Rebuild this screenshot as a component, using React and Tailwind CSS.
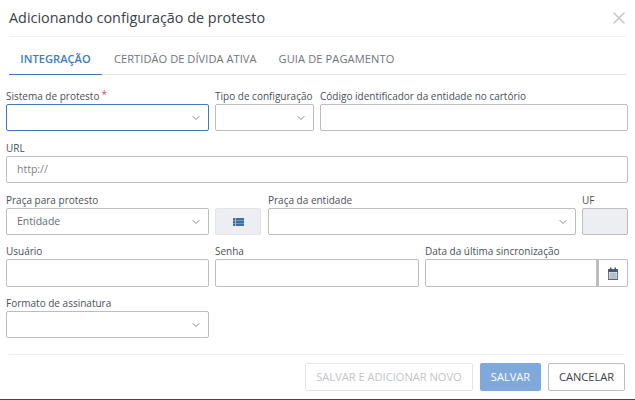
import React from "react";
import { ChevronDown, X } from "lucide-react";

const font = { fontFamily: '"Open Sans", sans-serif' };

function Label({ children, star }) {
  return (
    <div className="h-[13px] text-[10px] leading-[13px] text-[#4a4f57] whitespace-nowrap">
      {children}
      {star && <span className="text-[#d9534f] ml-[2px] relative -top-[2px]">*</span>}
    </div>
  );
}

function Box({ children, focus, disabled, className = "h-[27px]" }) {
  return (
    <div
      className={`mt-[1px] rounded-[2px] border flex items-center justify-between pl-[10px] pr-[6px] text-[10.5px] text-[#666b73] ${
        focus ? "border-[#3b7cc4]" : "border-[#bdbdbd]"
      } ${disabled ? "bg-[#eceef1]" : "bg-white"} ${className}`}
    >
      {children}
    </div>
  );
}

function Chevron() {
  return <ChevronDown size={12} strokeWidth={1.6} className="text-[#666b73] ml-auto" />;
}

function Calendar() {
  return (
    <svg width="10" height="13" viewBox="0 0 10 13">
      <rect x="0.5" y="2.5" width="9" height="10" fill="#eef2f6" stroke="#55677c" />
      <rect x="0.5" y="2.5" width="9" height="2.5" fill="#4a5a6c" />
      <rect x="2" y="0.5" width="1.5" height="3" fill="#5a4a40" />
      <rect x="6.5" y="0.5" width="1.5" height="3" fill="#40506a" />
      <path d="M0 7h10M0 9h10M0 11h10M3 5v7M5 5v7M7 5v7" stroke="#8a9bb0" strokeWidth="0.7" />
    </svg>
  );
}

function ListIcon() {
  return (
    <svg width="11" height="8" viewBox="0 0 11 8">
      <rect x="0" y="0" width="11" height="8" fill="#3f6fa6" />
      <rect x="0" y="2.4" width="11" height="0.5" fill="#a9bdd6" />
      <rect x="0" y="5.1" width="11" height="0.5" fill="#a9bdd6" />
      <rect x="2" y="0" width="0.8" height="8" fill="#c9c4c4" />
    </svg>
  );
}

export default function App() {
  return (
    <div className="w-[635px] h-[400px] bg-white flex flex-col overflow-hidden border-b border-[#444]" style={font}>
      <div className="mx-[9px] h-[37px] border-b border-[#f0f0f0] flex items-center justify-between shrink-0">
        <span className="text-[14.4px] leading-[20px] text-[#3c4046]">
          Adicionando configuração de protesto
        </span>
        <X size={20} strokeWidth={1.8} className="text-[#c4c6c9] -mr-[3px]" />
      </div>

      <div className="mx-[9px] mt-[12px] h-[26px] border-b border-[#e4e4e4] flex text-[11.1px] leading-[14px] tracking-[0.04px] shrink-0">
        <div className="w-[93px] h-[26px] border-b border-[#3b7cc4] text-center pt-[3px] font-semibold text-[#3b7cc4]">
          INTEGRAÇÃO
        </div>
        <div className="ml-[12px] pt-[3px] text-[#6f747b]">CERTIDÃO DE DÍVIDA ATIVA</div>
        <div className="ml-[22px] pt-[3px] text-[#6f747b] tracking-[0.1px]">GUIA DE PAGAMENTO</div>
      </div>

      <div className="pl-[6px] pr-[7px] pt-[15px] flex flex-col">
        <div className="flex gap-[6px]">
          <div className="w-[203px]">
            <Label star>Sistema de protesto</Label>
            <Box focus><Chevron /></Box>
          </div>
          <div className="w-[99px]">
            <Label>Tipo de configuração</Label>
            <Box><Chevron /></Box>
          </div>
          <div className="flex-1">
            <Label>Código identificador da entidade no cartório</Label>
            <Box />
          </div>
        </div>

        <div className="mt-[11px]">
          <Label>URL</Label>
          <Box><span className="text-[#7b8087]">http://</span></Box>
        </div>

        <div className="flex mt-[11px]">
          <div className="w-[203px]">
            <Label>Praça para protesto</Label>
            <Box>
              Entidade
              <Chevron />
            </Box>
          </div>
          <div className="w-[46px] ml-[6px] mt-[14px] h-[27px] bg-[#eceef1] border border-[#e4e6e9] rounded-[2px] flex items-center justify-center">
            <ListIcon />
          </div>
          <div className="w-[308px] ml-[7px]">
            <Label>Praça da entidade</Label>
            <Box><Chevron /></Box>
          </div>
          <div className="w-[46px] ml-[6px]">
            <Label>UF</Label>
            <Box disabled />
          </div>
        </div>

        <div className="flex mt-[10px]">
          <div className="w-[203px]">
            <Label>Usuário</Label>
            <Box className="h-[28px]" />
          </div>
          <div className="w-[204px] ml-[6px]">
            <Label>Senha</Label>
            <Box className="h-[28px]" />
          </div>
          <div className="flex-1 ml-[6px]">
            <Label>Data da última sincronização</Label>
            <div className="flex h-[28px] mt-[1px]">
              <div className="flex-1 border border-[#bdbdbd] rounded-l-[2px]" />
              <div className="w-[31px] border border-l-[2px] border-[#bdbdbd] rounded-r-[2px] flex items-center justify-center">
                <Calendar />
              </div>
            </div>
          </div>
        </div>

        <div className="mt-[10px] w-[203px]">
          <Label>Formato de assinatura</Label>
          <Box><Chevron /></Box>
        </div>
      </div>

      <div className="ml-[9px] mr-[10px] mt-[16px] border-t border-[#f0f0f0] pt-[8px] flex justify-end gap-[7px] text-[11.1px] shrink-0">
        <div className="w-[168px] h-[28px] border border-[#e4e4e4] rounded-[2px] flex items-center justify-center text-[#c2c4c8]">
          SALVAR E ADICIONAR NOVO
        </div>
        <div className="w-[61px] h-[28px] bg-[#7fa9da] rounded-[2px] flex items-center justify-center text-white">
          SALVAR
        </div>
        <div className="w-[77px] h-[28px] border border-[#bdbdbd] rounded-[2px] flex items-center justify-center text-[#3c4046]">
          CANCELAR
        </div>
      </div>
    </div>
  );
}
